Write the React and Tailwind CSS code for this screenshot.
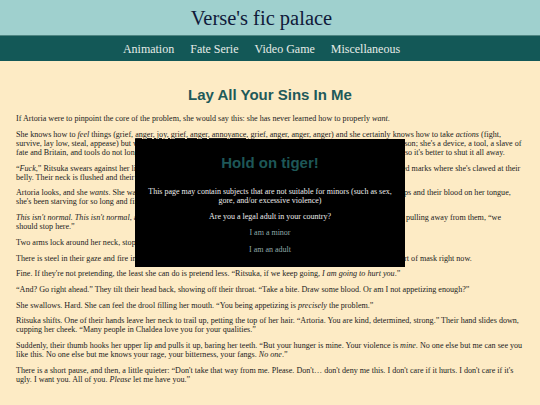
import { useState } from 'react';

const navLinks = ['Animation', 'Fate Serie', 'Video Game', 'Miscellaneous'];

function AgeGate({ onClose }) {
  return (
    <div className="fixed inset-0 flex items-center justify-center pointer-events-none">
      <div className="pointer-events-auto w-1/2 bg-black px-2 pt-[15px] pb-[13px] text-center font-['Liberation_Serif',serif] text-[8px] leading-[9px] text-[#ececec]">
        <h2 className="font-['Liberation_Sans',Arial,sans-serif] text-[15px] leading-[17px] font-bold text-[#1e5757]">
          Hold on tiger!
        </h2>
        <p className="mt-[16px]">
          This page may contain subjects that are not suitable for minors (such as sex, gore, and/or excessive violence)
        </p>
        <p className="mt-[7.5px]">Are you a legal adult in your country?</p>
        <div className="mt-[7px] flex flex-col items-center gap-[7.5px] text-[#8fa8a8]">
          <a href="#" onClick={(e) => e.preventDefault()}>I am a minor</a>
          <a href="#" onClick={(e) => { e.preventDefault(); onClose(); }}>I am an adult</a>
        </div>
      </div>
    </div>
  );
}

export default function App() {
  const [gateOpen, setGateOpen] = useState(true);

  return (
    <div className="min-h-screen bg-[#fdebc5] font-['Liberation_Serif',serif]">
      {/* Site header */}
      <header className="h-[35px] bg-[#9fd0ce] flex items-center justify-center pr-[17px]">
        <h1 className="text-[20.5px] leading-none text-[#101a3a] pt-[1px]">Verse's fic palace</h1>
      </header>
      <nav className="h-[26px] bg-[#135857] border-t border-[#4f8683] flex items-center justify-center gap-4 pr-[17px] text-[12px] text-[#e6ece8]">
        {navLinks.map((link) => (
          <a key={link} href="#" className="leading-none">{link}</a>
        ))}
      </nav>

      {/* Story body */}
      <main className="px-4 pt-[25px] pb-4 text-[8.1px] leading-[9.1px] text-[#222]">
        <h2 className="text-center font-['Liberation_Sans',Arial,sans-serif] text-[15px] leading-[17px] font-bold text-[#1e5a5a] mb-[11px]">
          Lay All Your Sins In Me
        </h2>
        <div className="flex flex-col gap-[6.6px]">
          <p>If Artoria were to pinpoint the core of the problem, she would say this: she has never learned how to properly <i>want</i>.</p>
          <p>
            She knows how to <i>feel</i> things (grief, <span className="underline">anger, joy, grief, anger, annoyance,</span> grief, anger, anger, anger) and she certainly knows how to take <i>actions</i> (fight, survive, lay low, steal, appease) but wanting was never part of the deal for her, not even once. Artoria Caster is not a person; she's a device, a tool, a slave of fate and Britain, and tools do not long for anything, do not ask for anything at all. Artoria Caster is not allowed to want, so it's better to shut it all away.
          </p>
          <p>
            “<i>Fuck</i>,” Ritsuka swears against her lips, pulling up the hem of their shirt and pressing her palm there, revealing bright red marks where she's clawed at their belly. Their neck is flushed and their pupils blown wide.
          </p>
          <p>
            Artoria looks, and she <i>wants</i>. She wants to bite and to take, she wants to feel her mouth on theirs and her teeth at their lips and their blood on her tongue, she's been starving for so long and finally she can <i>eat</i>, she can have it all.
          </p>
          <p>
            <i>This isn't normal. This isn't normal</i>, a small voice whispers in the back of her head. She lets out a nervous laugh, slowly pulling away from them, “we should stop here.”
          </p>
          <p>Two arms lock around her neck, stopping her from going anywhere.</p>
          <p>There is steel in their gaze and fire in their tone, and even without her eyes she would know they are not wearing any sort of mask right now.</p>
          <p>Fine. If they're not pretending, the least she can do is pretend less. “Ritsuka, if we keep going, <i>I am going to hurt you</i>.”</p>
          <p>“And? Go right ahead.” They tilt their head back, showing off their throat. “Take a bite. Draw some blood. Or am I not appetizing enough?”</p>
          <p>She swallows. Hard. She can feel the drool filling her mouth. “You being appetizing is <i>precisely</i> the problem.”</p>
          <p>
            Ritsuka shifts. One of their hands leave her neck to trail up, petting the top of her hair. “Artoria. You are kind, determined, strong.” Their hand slides down, cupping her cheek. “Many people in Chaldea love you for your qualities.”
          </p>
          <p>
            Suddenly, their thumb hooks her upper lip and pulls it up, baring her teeth. “But your hunger is mine. Your violence is <i>mine</i>. No one else but me can see you like this. No one else but me knows your rage, your bitterness, your fangs. <i>No one</i>.”
          </p>
          <p>
            There is a short pause, and then, a little quieter: “Don't take that way from me. Please. Don't… don't deny me this. I don't care if it hurts. I don't care if it's ugly. I want you. All of you. <i>Please</i> let me have you.”
          </p>
        </div>
      </main>

      {gateOpen && <AgeGate onClose={() => setGateOpen(false)} />}
    </div>
  );
}
